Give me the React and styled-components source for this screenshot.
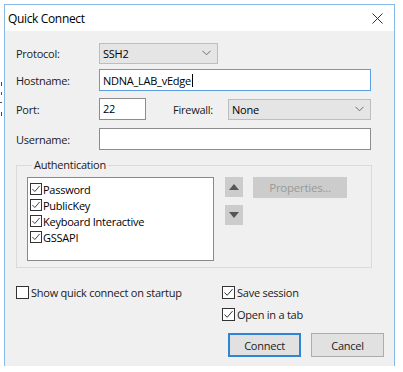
import React from "react";
import styled, { createGlobalStyle } from "styled-components";

const GlobalStyle = createGlobalStyle`
  html, body { margin: 0; padding: 0; background: #ffffff; }
  body {
    font-family: "Open Sans", "Noto Sans", "Liberation Sans", sans-serif;
    font-size: 11px;
    letter-spacing: -0.25px;
    color: #000;
  }
  * { box-sizing: border-box; }
`;

const Screen = styled.div`
  position: relative;
  width: 403px;
  height: 372px;
  padding: 4px 0 0 4px;
  overflow: hidden;
`;

const BehindMarks = styled.svg`
  position: absolute;
  left: 0;
  top: 80px;
`;

const Window = styled.div`
  width: 391px;
  height: 362px;
  border: 1px solid #86b8e8;
  border-bottom: none;
  background: #f0f0f0;
  display: flex;
  flex-direction: column;
`;

const TitleBar = styled.div`
  height: 26px;
  background: #ffffff;
  display: flex;
  align-items: center;
  justify-content: space-between;
  padding: 1px 11px 0 3px;
  font-size: 12px;
  letter-spacing: -0.35px;
  color: #000;
`;

const Body = styled.div`
  padding: 0 0 0 11px;
  display: flex;
  flex-direction: column;
`;

const Row = styled.div`
  display: flex;
  align-items: center;
  height: 22px;
  margin-top: ${(p) => p.$mt}px;
`;

const Label = styled.div`
  width: ${(p) => p.$w || 83}px;
  margin-left: ${(p) => p.$ml || 0}px;
  color: #1a1a1a;
  flex: none;
`;

const Select = styled.div`
  width: ${(p) => p.$w}px;
  height: 21px;
  background: #e5e5e5;
  border: 1px solid #bdbdbd;
  display: flex;
  align-items: center;
  justify-content: space-between;
  padding: 0 6px 0 3px;
  flex: none;
`;

const Input = styled.div`
  width: ${(p) => p.$w}px;
  height: 22px;
  background: #fff;
  border: 1px solid ${(p) => (p.$focus ? "#5a9de0" : "#8c8c8c")};
  display: flex;
  align-items: ${(p) => (p.$top ? "flex-start" : "center")};
  padding: ${(p) => (p.$top ? "2px 3px 0" : "0 3px")};
  flex: none;
`;

const Caret = styled.span`
  display: inline-block;
  width: 1px;
  height: 13px;
  background: #000;
  margin-left: 1px;
`;

const Group = styled.fieldset`
  width: 356px;
  margin: 8px 0 0 0;
  padding: 0 0 6px 10px;
  border: 1px solid #dadada;
  min-inline-size: 0;
`;

const Legend = styled.legend`
  padding: 0 2px;
  margin-left: 5px;
  line-height: 14px;
  color: #1a1a1a;
`;

const GroupInner = styled.div`
  display: flex;
  align-items: flex-start;
  margin-top: 5px;
`;

const List = styled.div`
  width: 187px;
  height: 84px;
  background: #fff;
  border: 1px solid #8a8a8a;
  padding: 3px 0 0 2px;
  display: flex;
  flex-direction: column;
`;

const ListItem = styled.div`
  display: flex;
  align-items: center;
  height: 16px;
  gap: 1px;
`;

const ArrowCol = styled.div`
  display: flex;
  flex-direction: column;
  gap: 8px;
  margin: 0 0 0 11px;
`;

const ArrowButton = styled.div`
  width: 18px;
  height: 20px;
  background: #cccccc;
  display: flex;
  align-items: center;
  justify-content: center;
`;

const PropButton = styled.div`
  width: 94px;
  height: 21px;
  margin: 0 0 0 10px;
  background: #cccccc;
  color: #9a9a9a;
  display: flex;
  align-items: center;
  justify-content: center;
  font-size: 11.5px;
`;

const Footer = styled.div`
  display: flex;
  margin-top: 18px;
`;

const LeftCol = styled.div`
  width: 206px;
`;

const RightCol = styled.div`
  display: flex;
  flex-direction: column;
  gap: 9px;
`;

const CheckRow = styled.div`
  display: flex;
  align-items: center;
  height: 13px;
  gap: 2px;
  color: #1a1a1a;
`;

const Box = styled.span`
  width: ${(p) => p.$s}px;
  height: ${(p) => p.$s}px;
  border: 1px solid #333;
  background: #fff;
  display: inline-flex;
  align-items: center;
  justify-content: center;
  flex: none;
`;

const ButtonRow = styled.div`
  display: flex;
  gap: 10px;
  margin: 3px 0 0 6px;
`;

const Button = styled.div`
  width: 73px;
  height: 24px;
  background: #e1e1e1;
  border: ${(p) => (p.$primary ? "2px solid #2f84d8" : "1px solid #adadad")};
  display: flex;
  align-items: center;
  justify-content: center;
  color: #1a1a1a;
`;

const Chevron = () => (
  <svg width="9" height="6" viewBox="0 0 9 6">
    <polyline points="0.5,0.8 4.5,4.8 8.5,0.8" fill="none" stroke="#6d6d6d" strokeWidth="1" />
  </svg>
);

const Check = ({ s }) => (
  <svg width={s - 2} height={s - 2} viewBox="0 0 11 11">
    <polyline points="1.5,5.5 4.2,8.3 9.6,2" fill="none" stroke="#333" strokeWidth="1" />
  </svg>
);

const CheckBox = ({ s = 13, checked }) => <Box $s={s}>{checked && <Check s={s} />}</Box>;

export default function App() {
  const methods = ["Password", "PublicKey", "Keyboard Interactive", "GSSAPI"];
  return (
    <Screen>
      <GlobalStyle />
      <BehindMarks width="4" height="40" viewBox="0 0 4 40">
        <rect x="1" y="2" width="1" height="4" fill="#444" />
        <rect x="1" y="12" width="1" height="3" fill="#555" />
        <rect x="0" y="22" width="2" height="1" fill="#555" />
        <rect x="1" y="32" width="1" height="4" fill="#444" />
      </BehindMarks>
      <Window>
        <TitleBar>
          <span>Quick Connect</span>
          <svg width="11" height="11" viewBox="0 0 11 11">
            <path d="M0.5 0.5 L10.5 10.5 M10.5 0.5 L0.5 10.5" stroke="#333" strokeWidth="1" fill="none" />
          </svg>
        </TitleBar>
        <Body>
          <Row $mt={11}>
            <Label>Protocol:</Label>
            <Select $w={119}>
              <span>SSH2</span>
              <Chevron />
            </Select>
          </Row>
          <Row $mt={5}>
            <Label>Hostname:</Label>
            <Input $w={272} $focus>
              <span>NDNA_LAB_vEdge</span>
              <Caret />
            </Input>
          </Row>
          <Row $mt={7}>
            <Label>Port:</Label>
            <Input $w={47} $top>
              22
            </Input>
            <Label $w={55} $ml={27}>
              Firewall:
            </Label>
            <Select $w={143}>
              <span>None</span>
              <Chevron />
            </Select>
          </Row>
          <Row $mt={8}>
            <Label>Username:</Label>
            <Input $w={272} />
          </Row>
          <Group>
            <Legend>Authentication</Legend>
            <GroupInner>
              <List>
                {methods.map((m) => (
                  <ListItem key={m}>
                    <CheckBox s={12} checked />
                    <span>{m}</span>
                  </ListItem>
                ))}
              </List>
              <ArrowCol>
                <ArrowButton>
                  <svg width="10" height="6" viewBox="0 0 10 6">
                    <polygon points="0,6 5,0 10,6" fill="#555" />
                  </svg>
                </ArrowButton>
                <ArrowButton>
                  <svg width="10" height="6" viewBox="0 0 10 6">
                    <polygon points="0,0 10,0 5,6" fill="#555" />
                  </svg>
                </ArrowButton>
              </ArrowCol>
              <PropButton>Properties...</PropButton>
            </GroupInner>
          </Group>
          <Footer>
            <LeftCol>
              <CheckRow>
                <CheckBox />
                <span>Show quick connect on startup</span>
              </CheckRow>
            </LeftCol>
            <RightCol>
              <CheckRow>
                <CheckBox checked />
                <span>Save session</span>
              </CheckRow>
              <CheckRow>
                <CheckBox checked />
                <span>Open in a tab</span>
              </CheckRow>
              <ButtonRow>
                <Button $primary>Connect</Button>
                <Button>Cancel</Button>
              </ButtonRow>
            </RightCol>
          </Footer>
        </Body>
      </Window>
    </Screen>
  );
}
